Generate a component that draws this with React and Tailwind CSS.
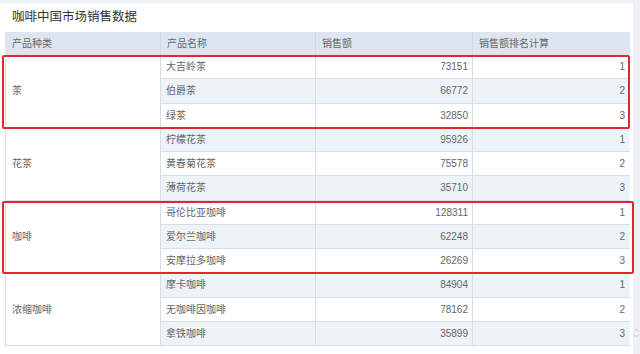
import React from "react";

const groups = [
  { cat: "茶", items: [["大吉岭茶", 73151, 1], ["伯爵茶", 66772, 2], ["绿茶", 32850, 3]] },
  { cat: "花茶", items: [["柠檬花茶", 95926, 1], ["黄春菊花茶", 75578, 2], ["薄荷花茶", 35710, 3]] },
  { cat: "咖啡", items: [["哥伦比亚咖啡", 128311, 1], ["爱尔兰咖啡", 62248, 2], ["安摩拉多咖啡", 26269, 3]] },
  { cat: "浓缩咖啡", items: [["摩卡咖啡", 84904, 1], ["无咖啡因咖啡", 78162, 2], ["拿铁咖啡", 35899, 3]] },
];

export default function App() {
  let idx = 0;
  return (
    <div
      className="relative w-[640px] h-[354px] overflow-hidden bg-[#edf1f5]"
      style={{ fontFamily: '"Liberation Sans", "Noto Sans CJK SC", sans-serif' }}
    >
      <div className="mt-[3px] w-[633px] h-[351px] bg-white flex flex-col">
        <div className="h-[29px] flex items-center pl-[12px] text-[12.5px] text-[#333]">咖啡中国市场销售数据</div>
        <div className="ml-[5px] w-[625px] flex flex-col text-[10px] text-[#666]">
          <div className="flex h-[23px] bg-[#dde6f0]">
            <div className="w-[156px] flex items-center pl-[7px] border-r border-[#cfd8e3]">产品种类</div>
            <div className="w-[155px] flex items-center pl-[6px] border-r border-[#cfd8e3]">产品名称</div>
            <div className="w-[157px] flex items-center pl-[6px] border-r border-[#cfd8e3]">销售额</div>
            <div className="flex-1 flex items-center pl-[6px]">销售额排名计算</div>
          </div>
          <div className="border-l border-[#d6dee7] flex flex-col">
            {groups.map((g) => (
              <div key={g.cat} className="flex">
                <div className="w-[155px] bg-white flex items-center pl-[6px] border-r border-b border-[#d6dee7]">{g.cat}</div>
                <div className="flex-1 flex flex-col">
                  {g.items.map((it) => {
                    const odd = idx++ % 2 === 1;
                    return (
                      <div
                        key={it[0]}
                        className={`flex h-[24.25px] border-b border-[#d6dee7] ${odd ? "bg-[#eef3f8]" : "bg-white"}`}
                      >
                        <div className="w-[155px] flex items-center pl-[5px] border-r border-[#d6dee7]">{it[0]}</div>
                        <div className="w-[157px] flex items-center justify-end pr-[4px] border-r border-[#d6dee7]">{it[1]}</div>
                        <div className="flex-1 flex items-center justify-end pr-[5px]">{it[2]}</div>
                      </div>
                    );
                  })}
                </div>
              </div>
            ))}
          </div>
        </div>
      </div>
      <div className="absolute left-[2px] top-[55px] w-[628px] h-[74px] border-2 border-[#e3262b] rounded-[2px]" />
      <div className="absolute left-[2px] top-[201px] w-[632px] h-[73px] border-2 border-[#e3262b] rounded-[2px]" />
      <svg className="absolute left-[633px] top-[327px]" width="7" height="12" viewBox="0 0 7 12">
        <path d="M1 4.5 L3.5 2 L6 4.5" fill="none" stroke="#c4ccd6" strokeWidth="1" />
        <path d="M1 7.5 L3.5 10 L6 7.5" fill="none" stroke="#c4ccd6" strokeWidth="1" />
      </svg>
    </div>
  );
}
